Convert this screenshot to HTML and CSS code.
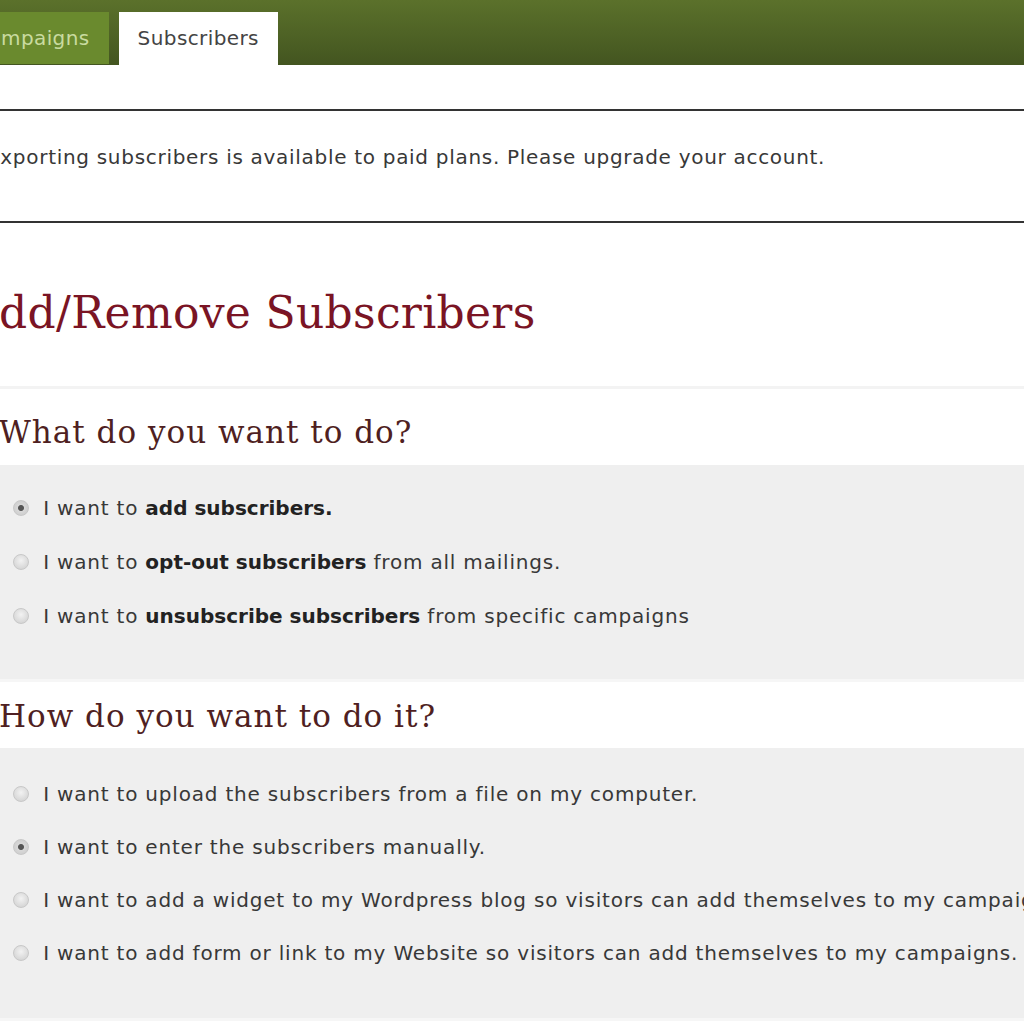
FILE: index.html
```html
<!DOCTYPE html>
<html>
<head>
  <title>Add/Remove Subscribers</title>
  <link rel="stylesheet" href="styles.css">
</head>
<body>
  <div class="topbar">
    <div class="tabs">
      <a class="tab" href="#">Campaigns</a>
      <a class="tab active" href="#">Subscribers</a>
    </div>
  </div>

  <div class="notice">
    <p>Exporting subscribers is available to paid plans. Please upgrade your account.</p>
  </div>

  <h1 class="page-title">Add/Remove Subscribers</h1>

  <div class="step">
    <h2>What do you want to do?</h2>
    <div class="choices">
      <label class="choice"><input type="radio" name="action" checked> I want to <b>add subscribers.</b></label>
      <label class="choice"><input type="radio" name="action"> I want to <b>opt-out subscribers</b> from all mailings.</label>
      <label class="choice"><input type="radio" name="action"> I want to <b>unsubscribe subscribers</b> from specific campaigns</label>
    </div>
  </div>

  <div class="step second">
    <h2>How do you want to do it?</h2>
    <div class="choices">
      <label class="choice"><input type="radio" name="method"> I want to upload the subscribers from a file on my computer.</label>
      <label class="choice"><input type="radio" name="method" checked> I want to enter the subscribers manually.</label>
      <label class="choice"><input type="radio" name="method"> I want to add a widget to my Wordpress blog so visitors can add themselves to my campaigns.</label>
      <label class="choice"><input type="radio" name="method"> I want to add form or link to my Website so visitors can add themselves to my campaigns.</label>
    </div>
  </div>
</body>
</html>
```

FILE: styles.css
```css
body {
  margin: 0;
  background-color: #fff;
  font-family: 'DejaVu Sans', Tahoma, sans-serif;
  font-size: 20px;
  letter-spacing: 0.8px;
  color: #383838;
  overflow: hidden;
}

/* Green header with tabs */
.topbar {
  height: 65px;
  background: linear-gradient(#5b712b, #435520);
  display: flex;
  align-items: flex-end;
}
.tabs {
  display: flex;
  gap: 10px;
  margin-left: -45px;
}
.tab {
  display: block;
  height: 52px;
  line-height: 52px;
  padding: 0 19px;
  font-size: 20px;
  letter-spacing: 0.4px;
  text-decoration: none;
  color: #c9dba0;
  background-color: #6a8a2e;
}
.tab.active {
  height: 53px;
  background-color: #fff;
  color: #444;
}

.notice {
  margin: 44px 0 0 -13px;
  border-top: 2px solid #333;
  border-bottom: 2px solid #333;
  display: flex;
  align-items: center;
  padding-bottom: 18px;
  box-sizing: border-box;
  height: 114px;
}
.notice p {
  margin: 0;
  white-space: nowrap;
  letter-spacing: 0.7px;
}

.page-title {
  margin: 0 0 0 -33px;
  height: 163px;
  line-height: 180px;
  font-family: 'DejaVu Serif', 'Liberation Serif', serif;
  font-weight: normal;
  font-size: 44px;
  letter-spacing: 0.3px;
  color: #7a1424;
  border-bottom: 3px solid #f3f3f3;
}

.step h2 {
  margin: 0 0 0 -1px;
  height: 76px;
  line-height: 86px;
  font-family: 'DejaVu Serif', 'Liberation Serif', serif;
  font-weight: normal;
  font-size: 31px;
  letter-spacing: 1px;
  color: #4f1f22;
}
.step.second h2 {
  height: 66px;
  line-height: 68px;
}

.choices {
  background-color: #efefef;
  padding: 28px 0 48px 13px;
  border-bottom: 3px solid #f6f6f6;
}
.second .choices {
  padding-top: 31px;
  padding-bottom: 50px;
}
.choice {
  display: block;
  height: 30px;
  line-height: 30px;
  margin-bottom: 24px;
  white-space: nowrap;
}
.second .choice {
  margin-bottom: 23px;
}
.choice:last-child {
  margin-bottom: 0;
}
.choice b {
  color: #222;
  font-weight: 600;
  letter-spacing: 0;
}

/* Grey rounded radios like the old browser look */
.choice input {
  appearance: none;
  margin: 0 7px 0 0;
  width: 16px;
  height: 16px;
  border-radius: 50%;
  border: 1px solid #c8c8c8;
  background: radial-gradient(circle at 50% 40%, #f2f2f2, #cdcdcd);
  vertical-align: -1px;
}
.choice input:checked {
  background: radial-gradient(circle, #555 0 2.5px, #d8d8d8 3.5px, #c8c8c8);
}
```
